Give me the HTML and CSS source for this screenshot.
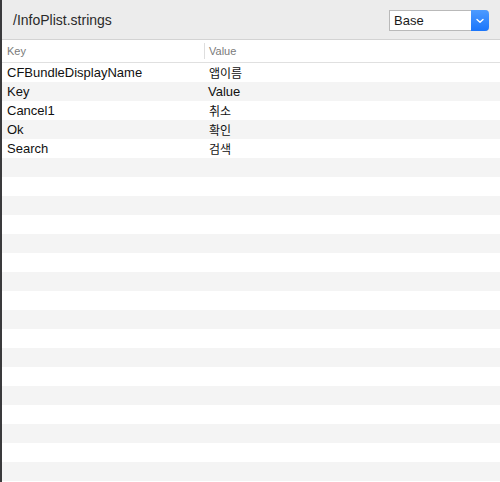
FILE: index.html
```html
<!DOCTYPE html>
<html>
<head>
<meta charset="utf-8">
<link rel="stylesheet" href="styles.css">
</head>
<body>
<div class="window">
  <div class="toolbar">
    <div class="title">/InfoPlist.strings</div>
    <div class="popup">
      <span class="popup-label">Base</span>
      <span class="popup-btn">
        <svg width="10" height="6" viewBox="0 0 10 6"><path d="M2 1.5 L5 4.3 L8 1.5" fill="none" stroke="#fff" stroke-width="1.4" stroke-linecap="round" stroke-linejoin="round"/></svg>
      </span>
    </div>
  </div>
  <div class="table">
    <div class="thead">
      <div class="th key">Key</div>
      <div class="th val">Value</div>
    </div>
    <div class="tbody">
      <div class="row"><div class="c key">CFBundleDisplayName</div><div class="c val ko">앱이름</div></div>
      <div class="row"><div class="c key">Key</div><div class="c val">Value</div></div>
      <div class="row"><div class="c key">Cancel1</div><div class="c val ko">취소</div></div>
      <div class="row"><div class="c key">Ok</div><div class="c val ko">확인</div></div>
      <div class="row"><div class="c key">Search</div><div class="c val ko">검색</div></div>
      <div class="row"></div><div class="row"></div><div class="row"></div><div class="row"></div>
      <div class="row"></div><div class="row"></div><div class="row"></div><div class="row"></div>
      <div class="row"></div><div class="row"></div><div class="row"></div><div class="row"></div>
      <div class="row"></div><div class="row"></div><div class="row"></div><div class="row"></div>
      <div class="row"></div><div class="row"></div>
    </div>
  </div>
</div>
</body>
</html>
```

FILE: styles.css
```css
html, body {
  margin: 0;
  padding: 0;
  background: #fff;
}
body {
  width: 500px;
  height: 482px;
  overflow: hidden;
  font-family: "Liberation Sans", "Noto Sans CJK KR", sans-serif;
  color: #111;
}
.window {
  height: 482px;
  border-left: 2px solid #3a3a3c;
  box-sizing: border-box;
  display: flex;
  flex-direction: column;
}
.toolbar {
  height: 39px;
  background: #ececec;
  border-bottom: 1px solid #d3d3d3;
  display: flex;
  align-items: flex-start;
  justify-content: space-between;
  flex-shrink: 0;
}
.title {
  margin: 12px 0 0 11px;
  font-size: 14px;
  color: #2a2a2a;
  line-height: 16px;
}
.popup {
  margin: 10px 11px 0 0;
  width: 100px;
  height: 21px;
  box-sizing: border-box;
  display: flex;
  background: #fff;
  border: 1px solid #b9b9b9;
  border-right: none;
  border-radius: 0 4px 4px 0;
}
.popup-label {
  flex: 1;
  font-size: 13px;
  line-height: 19px;
  padding-left: 4px;
  color: #1a1a1a;
}
.popup-btn {
  width: 18px;
  margin: -1px 0;
  background: linear-gradient(#4d9bff, #1a75fb);
  border-radius: 0 4px 4px 0;
  display: flex;
  align-items: center;
  justify-content: center;
}
.table {
  flex: 1;
  overflow: hidden;
}
.thead {
  height: 22px;
  border-bottom: 1px solid #e0e0e0;
  display: flex;
  align-items: center;
  font-size: 11px;
  color: #7a7a7a;
}
.th.key {
  width: 203px;
  padding-left: 5px;
  box-sizing: border-box;
  border-right: 1px solid #dedede;
  height: 16px;
  line-height: 16px;
}
.th.val {
  padding-left: 4px;
  line-height: 16px;
}
.row {
  height: 19px;
  display: flex;
  align-items: center;
  font-size: 13px;
  color: #111;
}
.row:nth-child(even) {
  background: #f4f4f4;
}
.c.key {
  width: 204px;
  padding-left: 5px;
  box-sizing: border-box;
}
.c.val {
  padding-left: 2px;
}
.c.ko {
  font-size: 12px;
  padding-left: 3px;
}
```
